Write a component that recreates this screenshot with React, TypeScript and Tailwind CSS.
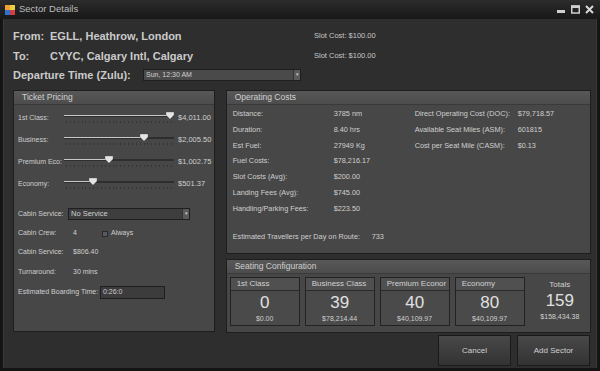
import React from "react";

const font = { fontFamily: '"Liberation Sans", Arial, sans-serif' };

function GroupHeader({ title }: { title: string }) {
  return (
    <div className="h-[14px] flex items-center px-[8px] bg-gradient-to-b from-[#585858] to-[#4c4c4c] border-b border-[#3a3a3a] text-[8.5px] text-[#d0d0d0] whitespace-nowrap">
      {title}
    </div>
  );
}

function Slider({ pos }: { pos: number }) {
  const ticks = Array.from({ length: 28 }, (_, i) => i);
  return (
    <div className="relative w-[110px] h-[14px] shrink-0">
      <div className="absolute left-0 right-0 top-[4px] h-[2px] bg-[#2e2e2e]" />
      <div className="absolute left-0 top-[4px] h-[1px] bg-[#c8c8c8]" style={{ width: pos }} />
      <svg className="absolute top-[1px]" style={{ left: pos - 4 }} width="8" height="7" viewBox="0 0 8 7">
        <path d="M0 0 H8 V3 L4 7 L0 3 Z" fill="#e4e4e4" stroke="#8a8a8a" strokeWidth="0.6" />
      </svg>
      <div className="absolute left-[2px] right-[2px] top-[10px] flex justify-between">
        {ticks.map((t) => (
          <div key={t} className="w-px h-[2px] bg-[#353535]" />
        ))}
      </div>
    </div>
  );
}

function PriceRow({ label, pos, value }: { label: string; pos: number; value: string }) {
  return (
    <div className="flex items-center h-[22px] whitespace-nowrap">
      <div className="w-[46px] text-[7px] text-[#cfcfcf]">{label}</div>
      <Slider pos={pos} />
      <div className="ml-[4px] text-[7.5px] text-[#cfcfcf]">{value}</div>
    </div>
  );
}

function CostRow({ label, value, lw }: { label: string; value: string; lw: string }) {
  return (
    <div className="flex items-center h-[15.7px] text-[7.3px] text-[#cfcfcf] whitespace-nowrap">
      <div className={lw}>{label}</div>
      <div>{value}</div>
    </div>
  );
}

function SeatBox({ title, count, cost }: { title: string; count: string; cost: string }) {
  return (
    <div className="w-[70px] h-[49px] border border-[#222] flex flex-col overflow-hidden">
      <div className="h-[13px] flex items-center px-[6px] border-b border-[#2a2a2a] bg-[#505050] text-[8px] text-[#d0d0d0] whitespace-nowrap">
        {title}
      </div>
      <div className="flex-1 flex flex-col items-center bg-[#4a4a4a]">
        <div className="text-[17px] leading-[22px] text-[#e0e0e0] mt-[1px]">{count}</div>
        <div className="text-[7px] text-[#cfcfcf] leading-[10px]">{cost}</div>
      </div>
    </div>
  );
}

export default function App() {
  return (
    <div className="w-[600px] h-[371px] bg-[#141414] flex flex-col overflow-hidden" style={font}>
      {/* title bar */}
      <div className="h-[19px] flex items-center bg-gradient-to-b from-[#2c2c2c] to-[#181818] pl-[5px] pr-[6px]">
        <svg width="10" height="10" viewBox="0 0 10 10">
          <rect x="0" y="0" width="5" height="5" fill="#f0a030" />
          <rect x="5" y="0" width="5" height="5" fill="#e8d040" />
          <rect x="0" y="5" width="5" height="5" fill="#3070d0" />
          <rect x="5" y="5" width="5" height="5" fill="#d04040" />
        </svg>
        <div className="ml-[4px] text-[9.5px] text-[#bdbdbd]">Sector Details</div>
        <div className="ml-auto flex items-center gap-[5px]">
          <svg width="9" height="9" viewBox="0 0 9 9">
            <rect x="0" y="5" width="8" height="3" fill="#cfcfcf" />
          </svg>
          <svg width="9" height="9" viewBox="0 0 9 9">
            <rect x="0.75" y="1" width="7.5" height="7" fill="none" stroke="#cfcfcf" strokeWidth="1.5" />
            <rect x="0" y="0.5" width="9" height="2.5" fill="#cfcfcf" />
          </svg>
          <svg width="9" height="9" viewBox="0 0 9 9">
            <path d="M1 1 L8 8 M8 1 L1 8" stroke="#d8d8d8" strokeWidth="2" />
          </svg>
        </div>
      </div>

      {/* body */}
      <div className="flex-1 mx-[3px] mb-[3px] bg-[#2e2e2e] border-l border-r border-[#3a3a3a] flex flex-col pl-[9px] pr-[5px]">
        <div className="pt-[7px] flex flex-col whitespace-nowrap">
          <div className="flex items-center h-[20px]">
            <div className="w-[37px] text-[11px] font-bold text-[#cacaca]">From:</div>
            <div className="w-[264px] text-[11px] font-bold text-[#cacaca]">EGLL, Heathrow, London</div>
            <div className="text-[7.5px] text-[#c8c8c8]">Slot Cost: $100.00</div>
          </div>
          <div className="flex items-center h-[20px]">
            <div className="w-[37px] text-[11px] font-bold text-[#cacaca]">To:</div>
            <div className="w-[264px] text-[11px] font-bold text-[#cacaca]">CYYC, Calgary Intl, Calgary</div>
            <div className="text-[7.5px] text-[#c8c8c8]">Slot Cost: $100.00</div>
          </div>
          <div className="flex items-center h-[18px]">
            <div className="w-[130px] text-[11px] font-bold text-[#cacaca]">Departure Time (Zulu):</div>
            <div className="w-[158px] h-[12px] bg-[#4a4a4a] border border-[#1e1e1e] flex items-center pl-[2px] text-[7px] text-[#d0d0d0]">
              <span>Sun, 12:30 AM</span>
              <div className="ml-auto w-[7px] h-full bg-[#5a5a5a] border-l border-[#333] flex items-center justify-center text-[5px]">▾</div>
            </div>
          </div>
        </div>

        <div className="mt-[6px] flex gap-[11px]">
          {/* Ticket Pricing */}
          <div className="w-[202px] h-[242px] border border-[#1e1e1e] bg-[#474747] flex flex-col">
            <GroupHeader title="Ticket Pricing" />
            <div className="pl-[4px] pt-[2px] flex flex-col">
              <PriceRow label="1st Class:" pos={106} value="$4,011.00" />
              <PriceRow label="Business:" pos={80} value="$2,005.50" />
              <PriceRow label="Premium Eco:" pos={45} value="$1,002.75" />
              <PriceRow label="Economy:" pos={29} value="$501.37" />
              <div className="flex items-center h-[20px] mt-[9px] whitespace-nowrap">
                <div className="w-[50px] text-[7px] text-[#cfcfcf]">Cabin Service:</div>
                <div className="w-[122px] h-[12px] bg-[#3e3e3e] border border-[#1e1e1e] flex items-center pl-[2px] text-[7.5px] text-[#d0d0d0]">
                  <span>No Service</span>
                  <div className="ml-auto w-[7px] h-full bg-[#5a5a5a] border-l border-[#333] flex items-center justify-center text-[5px]">▾</div>
                </div>
              </div>
              <div className="flex items-center h-[19px] text-[7px] text-[#cfcfcf] whitespace-nowrap">
                <div className="w-[55px]">Cabin Crew:</div>
                <div className="w-[29px]">4</div>
                <div className="w-[6px] h-[6px] border border-[#2a2a2a] bg-[#5a5a5a]" />
                <div className="ml-[3px]">Always</div>
              </div>
              <div className="flex items-center h-[19px] text-[7px] text-[#cfcfcf] whitespace-nowrap">
                <div className="w-[55px]">Cabin Service:</div>
                <div>$806.40</div>
              </div>
              <div className="flex items-center h-[20px] text-[7px] text-[#cfcfcf] whitespace-nowrap">
                <div className="w-[55px]">Turnaround:</div>
                <div>30 mins</div>
              </div>
              <div className="flex items-center h-[20px] text-[7px] text-[#cfcfcf] whitespace-nowrap">
                <div className="w-[82px]">Estimated Boarding Time:</div>
                <div className="w-[65px] h-[13px] bg-[#3c3c3c] border border-[#1e1e1e] flex items-center pl-[2px]">0:26:0</div>
              </div>
            </div>
          </div>

          {/* right column */}
          <div className="w-[366px] flex flex-col gap-[5px]">
            <div className="h-[164px] border border-[#1e1e1e] bg-[#474747] flex flex-col">
              <GroupHeader title="Operating Costs" />
              <div className="flex pl-[6px] pt-[2px]">
                <div className="w-[182px] flex flex-col">
                  <CostRow lw="w-[101px]" label="Distance:" value="3785 nm" />
                  <CostRow lw="w-[101px]" label="Duration:" value="8.40 hrs" />
                  <CostRow lw="w-[101px]" label="Est Fuel:" value="27949 Kg" />
                  <CostRow lw="w-[101px]" label="Fuel Costs:" value="$78,216.17" />
                  <CostRow lw="w-[101px]" label="Slot Costs (Avg):" value="$200.00" />
                  <CostRow lw="w-[101px]" label="Landing Fees (Avg):" value="$745.00" />
                  <CostRow lw="w-[101px]" label="Handling/Parking Fees:" value="$223.50" />
                  <div className="flex items-center h-[14px] mt-[14px] text-[7.3px] text-[#cfcfcf] whitespace-nowrap">
                    <div className="w-[139px]">Estimated Travellers per Day on Route:</div>
                    <div>733</div>
                  </div>
                </div>
                <div className="flex flex-col">
                  <CostRow lw="w-[103px]" label="Direct Operating Cost (DOC):" value="$79,718.57" />
                  <CostRow lw="w-[103px]" label="Available Seat Miles (ASM):" value="601815" />
                  <CostRow lw="w-[103px]" label="Cost per Seat Mile (CASM):" value="$0.13" />
                </div>
              </div>
            </div>

            <div className="h-[74px] border border-[#1e1e1e] bg-[#474747] flex flex-col">
              <GroupHeader title="Seating Configuration" />
              <div className="flex gap-[5px] pl-[3px] pt-[3px]">
                <SeatBox title="1st Class" count="0" cost="$0.00" />
                <SeatBox title="Business Class" count="39" cost="$78,214.44" />
                <SeatBox title="Premium Econor" count="40" cost="$40,109.97" />
                <SeatBox title="Economy" count="80" cost="$40,109.97" />
                <div className="flex-1 flex flex-col items-center pt-[2px] whitespace-nowrap">
                  <div className="text-[8px] text-[#d0d0d0] leading-[10px] mt-[1px]">Totals</div>
                  <div className="text-[17px] leading-[22px] text-[#e0e0e0]">159</div>
                  <div className="text-[7px] text-[#cfcfcf] leading-[10px]">$158,434.38</div>
                </div>
              </div>
            </div>
          </div>
        </div>

        {/* buttons */}
        <div className="mt-[2px] flex justify-end gap-[6px] pr-[1px]">
          <button className="w-[73px] h-[31px] border border-[#1a1a1a] bg-gradient-to-b from-[#484848] to-[#333] text-[8px] text-[#d0d0d0]">
            Cancel
          </button>
          <button className="w-[73px] h-[31px] border border-[#1a1a1a] bg-gradient-to-b from-[#484848] to-[#333] text-[8px] text-[#d0d0d0]">
            Add Sector
          </button>
        </div>
      </div>
    </div>
  );
}
